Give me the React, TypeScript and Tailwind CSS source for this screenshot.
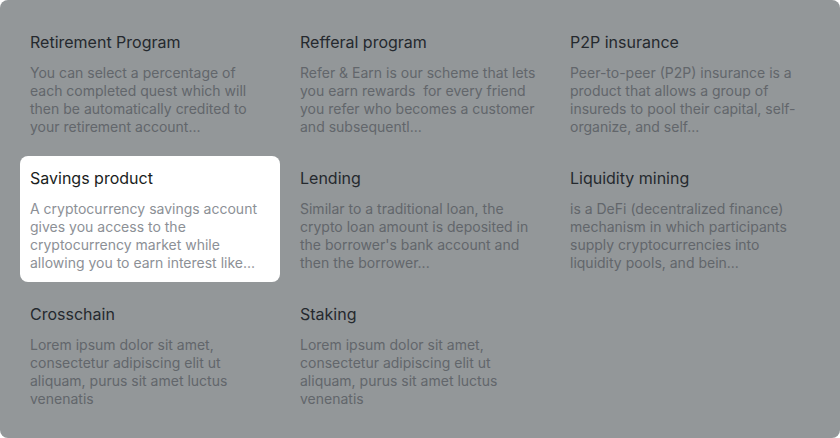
const items = [
  {
    title: 'Retirement Program',
    body: 'You can select a percentage of each completed quest which will then be automatically credited to your retirement account...',
  },
  {
    title: 'Refferal program',
    body: 'Refer & Earn is our scheme that lets you earn rewards  for every friend you refer who becomes a customer and subsequentl...',
  },
  {
    title: 'P2P insurance',
    body: 'Peer-to-peer (P2P) insurance is a product that allows a group of insureds to pool their capital, self-organize, and self...',
  },
  {
    title: 'Savings product',
    body: 'A cryptocurrency savings account gives you access to the cryptocurrency market while allowing you to earn interest like...',
    active: true,
  },
  {
    title: 'Lending',
    body: "Similar to a traditional loan, the crypto loan amount is deposited in the borrower's bank account and then the borrower...",
  },
  {
    title: 'Liquidity mining',
    body: 'is a DeFi (decentralized finance) mechanism in which participants supply cryptocurrencies into liquidity pools, and bein...',
  },
  {
    title: 'Crosschain',
    body: 'Lorem ipsum dolor sit amet, consectetur adipiscing elit ut aliquam, purus sit amet luctus venenatis',
  },
  {
    title: 'Staking',
    body: 'Lorem ipsum dolor sit amet, consectetur adipiscing elit ut aliquam, purus sit amet luctus venenatis',
  },
];

export default function App() {
  return (
    <div className="w-[840px] h-[438px] bg-white" style={{ fontFamily: 'Inter, "Noto Sans", sans-serif' }}>
      <div className="h-full rounded-lg bg-[#939799] p-5">
        <div className="grid grid-cols-[260px_260px_260px] grid-rows-[126px_126px_126px] gap-[10px]">
          {items.map(item => (
            <div
              key={item.title}
              className={`rounded-lg px-[10px] pt-[10px] pb-[10px] ${item.active ? 'bg-white' : ''}`}
            >
              <h3 className={`text-base leading-6 ${item.active ? 'text-[#1a1d21]' : 'text-[#25292e]'}`}>
                {item.title}
              </h3>
              <p className={`mt-[10px] text-sm leading-[18px] whitespace-pre-wrap ${item.active ? 'text-[#8c9096]' : 'text-[#62666b]'}`}>
                {item.body}
              </p>
            </div>
          ))}
        </div>
      </div>
    </div>
  );
}
